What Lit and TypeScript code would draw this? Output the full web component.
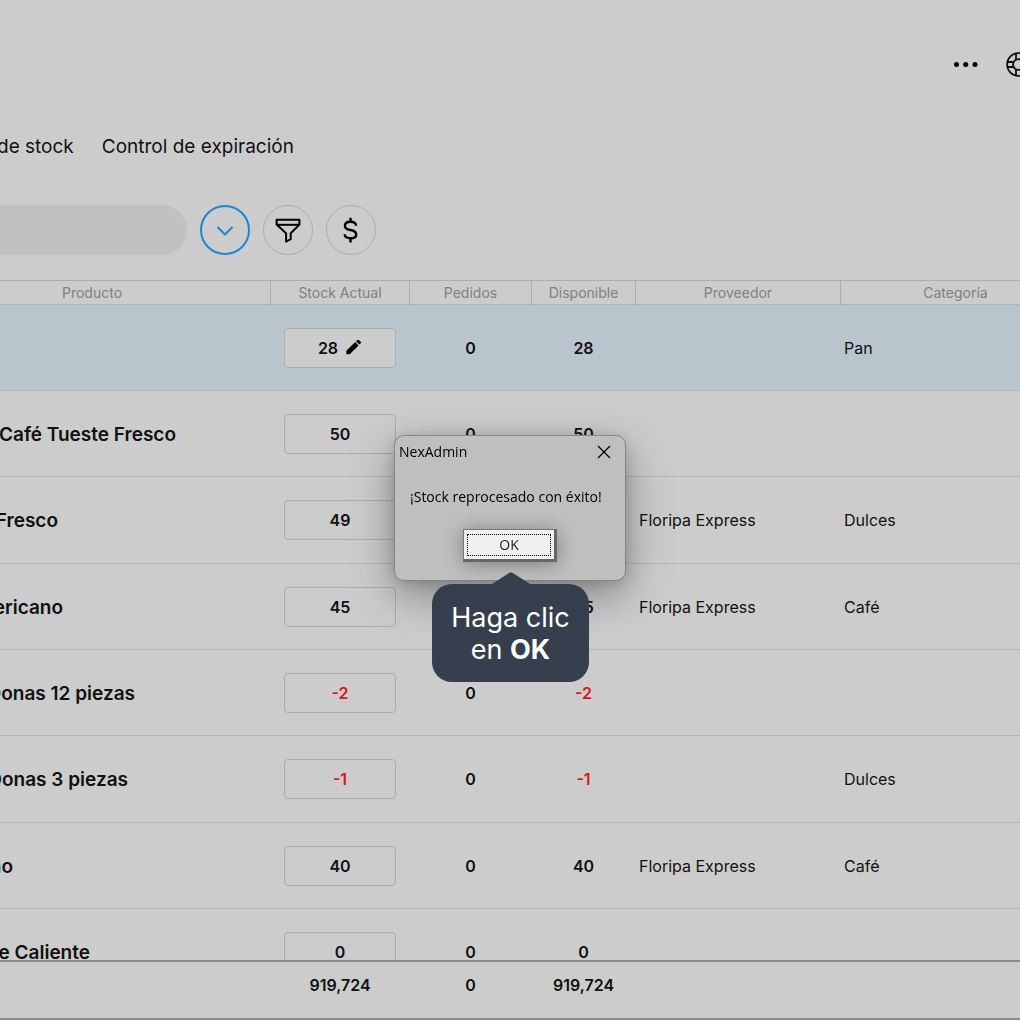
import { LitElement, html, css, svg, nothing } from "lit";
import { customElement, property } from "lit/decorators.js";
import { classMap } from "lit/directives/class-map.js";

interface StockRow {
  name: string;
  /** Width in pixels of the part of the name column that is scrolled into view. */
  visible: number;
  stock: number;
  orders: number;
  available: number;
  supplier: string;
  category: string;
  selected?: boolean;
}

const ROWS: StockRow[] = [
  { name: "", visible: 0, stock: 28, orders: 0, available: 28, supplier: "", category: "Pan", selected: true },
  { name: "Café Tueste Fresco", visible: 176, stock: 50, orders: 0, available: 50, supplier: "", category: "" },
  { name: "Fresco", visible: 58, stock: 49, orders: 0, available: 49, supplier: "Floripa Express", category: "Dulces" },
  { name: "ericano", visible: 63, stock: 45, orders: 0, available: 45, supplier: "Floripa Express", category: "Café" },
  { name: "Donas 12 piezas", visible: 135, stock: -2, orders: 0, available: -2, supplier: "", category: "" },
  { name: "Donas 3 piezas", visible: 128, stock: -1, orders: 0, available: -1, supplier: "", category: "Dulces" },
  { name: "no", visible: 13, stock: 40, orders: 0, available: 40, supplier: "Floripa Express", category: "Café" },
  { name: "e Caliente", visible: 90, stock: 0, orders: 0, available: 0, supplier: "", category: "" },
];

const dotsIcon = svg`<svg width="26" height="26" viewBox="0 0 26 26" fill="#000"><circle cx="3.5" cy="13.500" r="2.5"/><circle cx="12.7" cy="13.500" r="2.5"/><circle cx="22" cy="13.500" r="2.5"/></svg>`;

const helpIcon = svg`<svg width="26" height="26" viewBox="0 0 26 26" fill="none" stroke="#111" stroke-width="1.8"><circle cx="12.500" cy="13.500" r="11.4"/><circle cx="12.500" cy="13.500" r="5.400"/><path d="M10 2.500v6M15 2.500v6M10 18.500V24.500M15 18.500V24.500M1.500 11h6M1.500 16h6M17.500 11H23.500M17.500 16H23.500"/></svg>`;

const chevronIcon = svg`<svg width="24" height="24" viewBox="0 0 24 24" fill="none" stroke="#1b87d0" stroke-width="2" stroke-linecap="round" stroke-linejoin="round"><path d="M5 9.5l7 7 7-7"/></svg>`;

const filterIcon = svg`<svg width="28" height="28" viewBox="0 0 28 28" fill="none" stroke="#000" stroke-width="2" stroke-linejoin="round"><path d="M2.600 3.800H25.400V8.600L16.7 17.200V23.200L12.100 25.600V17.200L2.600 8.600Z"/><path d="M2.8 8.800H25"/></svg>`;

const dollarIcon = svg`<svg width="28" height="28" viewBox="0 0 28 28" fill="none" stroke="#000" stroke-width="2.4"><path d="M13.500 1.8V6M13.500 22.2V26.600"/><path d="M19.1 9.8C19.1 7.2 16.8 5.8 13.500 5.8S7.900 7.4 7.900 9.9C7.900 12.4 9.9 13.3 13.500 14S19.200 15.8 19.200 18.400 16.900 22.200 13.500 22.200 7.700 21 7.700 18.2"/></svg>`;

const pencilIcon = svg`<svg width="17" height="16" viewBox="0 0 18 18" fill="#000"><path d="M1 16V12.2L10.9 2.3 14.7 6.1 4.8 16Z"/><path d="M11.8 1.4L13.6 -.4Q14.1 -.9 14.8 -.3L17.3 2.2Q17.9 2.9 17.4 3.4L15.6 5.2Z"/></svg>`;

const closeIcon = svg`<svg width="14" height="14" viewBox="0 0 14 14" fill="none" stroke="#000" stroke-width="1.3"><path d="M1 1L13 13M13 1L1 13"/></svg>`;

@customElement("stock-table")
export class StockTable extends LitElement {
  @property({ attribute: false }) rows: StockRow[] = [];

  static styles = css`
    :host {
      display: block;
    }
    .table {
      width: 105%;
      table-layout: fixed;
      border-spacing: 0;
      font-size: 16px;
    }
    .col-stock { width: 139px; }
    .col-orders { width: 122px; }
    .col-available { width: 104px; }
    .col-supplier { width: 205px; }
    .col-category { width: 230px; }
    th, td {
      box-sizing: border-box;
      padding: 0;
    }
    .head {
      height: 25px;
      font-size: 14px;
      line-height: 16px;
      font-weight: 400;
      color: #808080;
      border-top: 1px solid #adadad;
      border-bottom: 1px solid #b2b2b2;
      border-right: 1px solid #adadad;
    }
    .head-product {
      padding-right: 86px;
    }
    .row { height: 86px; }
    .row:nth-child(3n) { height: 87px; }
    .row > * { border-bottom: 1px solid #b8b8b8; }
    .selected { background: #b9c5cc; }
    .name {
      font-size: 19px;
      line-height: 24px;
      font-weight: 600;
      text-align: left;
    }
    .clip {
      display: flex;
      justify-content: flex-end;
      overflow: hidden;
      white-space: nowrap;
      padding-top: 2px;
    }
    .number {
      padding-right: 1px;
      text-align: center;
      font-weight: 600;
    }
    .text { padding-left: 3px; }
    .stock {
      display: flex;
      align-items: center;
      justify-content: center;
      gap: 7px;
      box-sizing: border-box;
      width: 112px;
      height: 40px;
      margin: 0 auto;
      padding: 0;
      font: inherit;
      color: inherit;
      background: #ccc;
      border: 1px solid #acacac;
      border-radius: 4px;
    }
    .number.negative { color: #dc1420; }
    .stock.negative { color: #dc1420; }
    .total {
      position: sticky;
      bottom: 0;
      height: 60px;
      padding-bottom: 10px;
      background: #ccc;
      border-top: 2px solid #8c8c8c;
      border-bottom: 2px solid #8c8c8c;
    }
  `;

  private renderRow(row: StockRow) {
    return html`<tr class=${classMap({ row: true, selected: !!row.selected })}>
      <th class="name" scope="row">
        <div class="clip" style="width:${row.visible}px"><span>${row.name}</span></div>
      </th>
      <td class="number">
        <button type="button" class=${classMap({ stock: true, negative: row.stock < 0 })}>
          ${row.stock}${row.selected ? pencilIcon : nothing}
        </button>
      </td>
      <td class="number">${row.orders}</td>
      <td class=${classMap({ number: true, negative: row.available < 0 })}>${row.available}</td>
      <td class="text">${row.supplier}</td>
      <td class="text">${row.category}</td>
    </tr>`;
  }

  render() {
    return html`<table class="table">
      <colgroup>
        <col />
        <col class="col-stock" />
        <col class="col-orders" />
        <col class="col-available" />
        <col class="col-supplier" />
        <col class="col-category" />
      </colgroup>
      <thead>
        <tr>
          <th class="head head-product" scope="col">Producto</th>
          <th class="head" scope="col">Stock Actual</th>
          <th class="head" scope="col">Pedidos</th>
          <th class="head" scope="col">Disponible</th>
          <th class="head" scope="col">Proveedor</th>
          <th class="head" scope="col">Categoría</th>
        </tr>
      </thead>
      <tbody>
        ${this.rows.map((row) => this.renderRow(row))}
      </tbody>
      <tfoot>
        <tr>
          <td class="number total"></td>
          <td class="number total">919,724</td>
          <td class="number total">0</td>
          <td class="number total">919,724</td>
          <td class="number total"></td>
          <td class="number total"></td>
        </tr>
      </tfoot>
    </table>`;
  }
}

@customElement("message-dialog")
export class MessageDialog extends LitElement {
  static styles = css`
    :host {
      position: absolute;
      inset: 0;
      display: grid;
      place-items: center;
    }
    .dialog {
      box-sizing: border-box;
      width: 232px;
      margin-bottom: 4px;
      padding-bottom: 18px;
      background: #bfbfbf;
      border: 1px solid #858585;
      border-radius: 10px;
      box-shadow: 0 14px 44px rgba(0, 0, 0, 0.36), 0 2px 14px rgba(0, 0, 0, 0.14);
      font-family: "Open Sans", "Noto Sans", sans-serif;
      color: #000;
    }
    .bar {
      display: flex;
      align-items: center;
      justify-content: space-between;
      height: 32px;
      padding: 0 14px 0 4px;
    }
    .title {
      margin: 0;
      font-size: 14px;
      line-height: 20px;
      font-weight: 400;
    }
    .close {
      display: flex;
      padding: 0;
      border: 0;
      background: none;
    }
    .message {
      margin: 19px 0 0;
      padding-left: 15px;
      font-size: 14px;
      line-height: 20px;
      white-space: nowrap;
    }
    .anchor {
      position: relative;
      width: 94px;
      margin: 22px auto 0;
    }
    .ok {
      display: block;
      width: 100%;
      height: 33px;
      padding: 3px;
      border: solid;
      border-width: 1px 3px 3px 1px;
      border-color: #777 #666 #666 #777;
      background: #f0f0f0;
      box-shadow: 0 2px 20px rgba(0, 0, 0, 0.35);
      font: 14px/20px "Open Sans", "Noto Sans", sans-serif;
      color: #222;
    }
    .focus {
      display: block;
      border: 1px dotted #000;
    }
    .tip {
      position: absolute;
      top: 55px;
      left: 50%;
      margin-left: -78px;
      box-sizing: border-box;
      width: 157px;
      padding: 18px 0 16px;
      background: #363f4d;
      border-radius: 20px;
      font-family: Inter, sans-serif;
      font-size: 27px;
      line-height: 32px;
      text-align: center;
      color: #fff;
    }
    .arrow {
      position: absolute;
      left: 50%;
      bottom: 100%;
      margin-left: -19px;
      display: block;
    }
    .strong { font-weight: 700; }
  `;

  render() {
    return html`<section class="dialog" role="dialog" aria-labelledby="title" aria-describedby="message">
      <header class="bar">
        <h2 class="title" id="title">NexAdmin</h2>
        <button class="close" type="button" aria-label="Cerrar">${closeIcon}</button>
      </header>
      <p class="message" id="message">¡Stock reprocesado con éxito!</p>
      <div class="anchor">
        <button class="ok" type="button"><span class="focus">OK</span></button>
        <div class="tip" role="tooltip">
          <svg class="arrow" width="38" height="12" viewBox="0 0 38 12"><path d="M0 12L17.5.8Q19 0 20.500 .8L38 12Z" fill="#363f4d"/></svg>
          Haga clic<br />en <b class="strong">OK</b>
        </div>
      </div>
    </section>`;
  }
}

@customElement("app-root")
export class AppRoot extends LitElement {
  static styles = css`
    :host {
      display: block;
    }
    .page {
      position: relative;
      display: flex;
      flex-direction: column;
      height: 100vh;
      overflow: hidden;
      background: #ccc;
      color: #111;
      font-family: Inter, sans-serif;
    }
    .header {
      display: flex;
      align-items: center;
      justify-content: flex-end;
      gap: 27px;
      box-sizing: border-box;
      width: 105%;
      height: 128px;
      padding-right: 39px;
    }
    .icon-button {
      display: flex;
      padding: 0;
      border: 0;
      background: none;
    }
    .tabs {
      display: flex;
      align-items: center;
      gap: 28px;
      height: 38px;
      margin-left: -3px;
      font-size: 19px;
      line-height: 24px;
      white-space: nowrap;
    }
    .tab {
      color: #111;
      text-decoration: none;
    }
    .tools {
      display: flex;
      gap: 13px;
      padding: 39px 0 25px;
    }
    .search {
      box-sizing: border-box;
      width: 187px;
      height: 50px;
      padding: 0 24px 0 0;
      border: 0;
      border-radius: 0 25px 25px 0;
      background: #c1c1c1;
      font: inherit;
    }
    .round {
      display: grid;
      place-items: center;
      box-sizing: border-box;
      width: 50px;
      height: 50px;
      padding: 0;
      border: 1px solid #adadad;
      border-radius: 50%;
      background: none;
    }
    .active { border: 2px solid #1b87d0; }
    .grid {
      flex: 1;
      min-height: 0;
      overflow: hidden;
    }
  `;

  render() {
    return html`<main class="page">
      <header class="header">
        <button class="icon-button" type="button" aria-label="Más">${dotsIcon}</button>
        <button class="icon-button" type="button" aria-label="Ayuda">${helpIcon}</button>
      </header>
      <nav class="tabs">
        <a class="tab" href="#stock">de stock</a>
        <a class="tab" href="#expiracion">Control de expiración</a>
      </nav>
      <div class="tools">
        <input class="search" type="search" aria-label="Buscar" />
        <button class="round active" type="button" aria-label="Desplegar">${chevronIcon}</button>
        <button class="round" type="button" aria-label="Filtrar">${filterIcon}</button>
        <button class="round" type="button" aria-label="Precio">${dollarIcon}</button>
      </div>
      <stock-table class="grid" .rows=${ROWS}></stock-table>
      <message-dialog></message-dialog>
    </main>`;
  }
}
